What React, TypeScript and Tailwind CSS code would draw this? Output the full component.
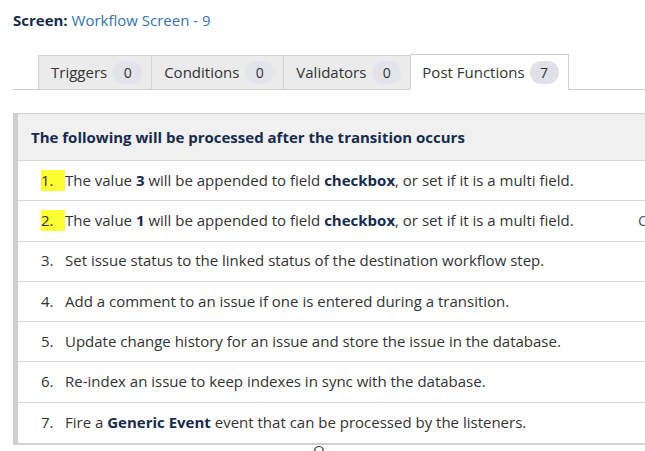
import React from "react";

const rows: React.ReactNode[] = [
  <>The value <b className="font-bold text-[#172b4d]">3</b> will be appended to field <b className="font-bold text-[#172b4d]">checkbox</b>, or set if it is a multi field.</>,
  <>The value <b className="font-bold text-[#172b4d]">1</b> will be appended to field <b className="font-bold text-[#172b4d]">checkbox</b>, or set if it is a multi field.</>,
  <>Set issue status to the linked status of the destination workflow step.</>,
  <>Add a comment to an issue if one is entered during a transition.</>,
  <>Update change history for an issue and store the issue in the database.</>,
  <>Re-index an issue to keep indexes in sync with the database.</>,
  <>Fire a <b className="font-bold text-[#172b4d]">Generic Event</b> event that can be processed by the listeners.</>,
];

function Tab({ label, count, active }: { label: string; count: number; active?: boolean }) {
  return (
    <div
      className={
        active
          ? "flex items-center gap-[5px] h-[36px] pl-[11px] pr-[9px] bg-white border border-[#cfcfcf] border-b-white -mb-px"
          : "flex items-center gap-[6px] h-[34px] pl-[12px] pr-[9px] bg-[#ebebeb] border border-[#d4d4d4] border-b-0 border-r-0"
      }
    >
      <span>{label}</span>
      <span
        className={
          (active ? "bg-[#dfe1e6]" : "bg-[#e2e4ea]") +
          " text-[#333] rounded-full h-[23px] min-w-[29px] px-[8px] flex items-center justify-center text-[14px]"
        }
      >
        {count}
      </span>
    </div>
  );
}

export default function App() {
  return (
    <div
      className="w-[645px] h-[451px] overflow-hidden bg-white text-[15px] text-[#333]"
      style={{ fontFamily: '"Open Sans", "Noto Sans", sans-serif' }}
    >
      <div className="pl-[13px] pt-[9px] text-[15px] leading-[22px]">
        <span className="font-bold text-[#172b4d]">Screen:</span>{" "}
        <span className="text-[#3572b0]">Workflow Screen - 9</span>
      </div>
      <div className="ml-[13px] mt-[24px] border-b border-[#cfcfcf] flex items-end pl-[23px] pr-0 h-[35px]">
        <div className="flex items-end ml-[2px]">
          <Tab label="Triggers" count={0} />
          <Tab label="Conditions" count={0} />
          <Tab label="Validators" count={0} />
          <Tab label="Post Functions" count={7} active />
        </div>
      </div>
      <div className="ml-[13px] mt-[23px] w-[660px] border border-[#d0d0d0] border-l-[5px] border-l-[#cfcfcf] border-b-2">
        <div className="h-[47px] bg-[#f0f0f0] flex items-center pl-[13px] font-bold text-[#172b4d] border-b border-[#d6d6d6]">
          The following will be processed after the transition occurs
        </div>
        {rows.map((r, i) => (
          <div
            key={i}
            className={
              "h-[40.3px] flex items-center pl-[23px] pb-[1px] relative " +
              (i < rows.length - 1 ? "border-b border-[#d6d6d6]" : "")
            }
          >
            <span className={"w-[24px] " + (i < 2 ? "bg-[#ffff33] h-[21px] flex items-center" : "")}>{i + 1}.</span>
            <span>{r}</span>
            {i === 1 && <span className="absolute left-[620px] text-[#555]">C</span>}
          </div>
        ))}
      </div>
      <div className="relative">
        <span className="absolute left-[313px] -top-[6px] text-[#444]">O</span>
      </div>
    </div>
  );
}
